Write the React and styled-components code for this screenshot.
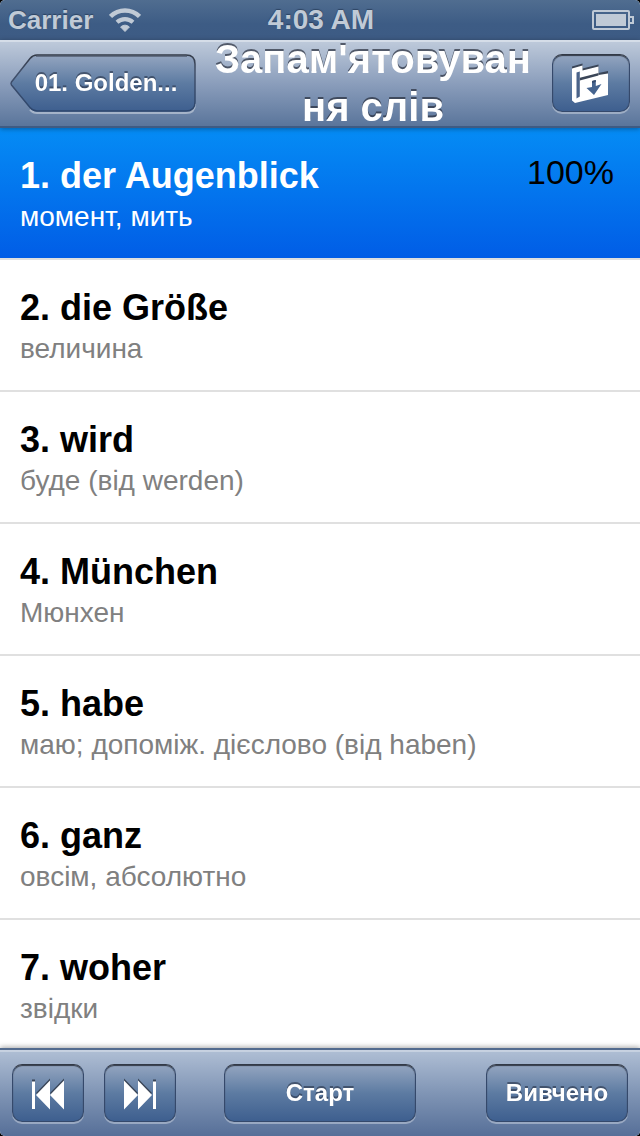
import React, { useState } from 'react';
import styled, { createGlobalStyle, css } from 'styled-components';

const words = [
  { term: 'der Augenblick', translation: 'момент, мить', progress: '100%' },
  { term: 'die Größe', translation: 'величина' },
  { term: 'wird', translation: 'буде (від werden)' },
  { term: 'München', translation: 'Мюнхен' },
  { term: 'habe', translation: 'маю; допоміж. дієслово (від haben)' },
  { term: 'ganz', translation: 'овсім, абсолютно' },
  { term: 'woher', translation: 'звідки' },
];

const App = () => {
  const [selected, setSelected] = useState(0);

  return (
    <Screen>
      <GlobalStyle />
      <StatusBar>
        <Carrier>
          Carrier
          <WifiIcon />
        </Carrier>
        <Clock>4:03 AM</Clock>
        <BatteryIcon />
      </StatusBar>

      <NavBar>
        <BackButton type="button">
          <BackShape />
          <span>01. Golden...</span>
        </BackButton>
        <Title>Запам'ятовування слів</Title>
        <BarButton type="button" $width={78} aria-label="Import">
          <FolderIcon />
        </BarButton>
      </NavBar>

      <WordList>
        {words.map(({ term, translation, progress }, idx) => (
          <li key={term}>
            <WordRow
              type="button"
              $active={idx === selected}
              onClick={() => setSelected(idx)}
            >
              <WordText>
                <strong>{idx + 1}. {term}</strong>
                <small>{translation}</small>
              </WordText>
              {progress && <Progress>{progress}</Progress>}
            </WordRow>
          </li>
        ))}
      </WordList>

      <Toolbar>
        <SkipButtons>
          <BarButton
            type="button"
            $width={72}
            aria-label="Previous"
            onClick={() => setSelected(Math.max(selected - 1, 0))}
          >
            <SkipIcon />
          </BarButton>
          <BarButton
            type="button"
            $width={72}
            aria-label="Next"
            onClick={() => setSelected(Math.min(selected + 1, words.length - 1))}
          >
            <SkipIcon forward />
          </BarButton>
        </SkipButtons>
        <BarButton type="button" $width={192}>Старт</BarButton>
        <LearnedButton type="button" $width={142}>Вивчено</LearnedButton>
      </Toolbar>
    </Screen>
  );
};

const WifiIcon = () => (
  <svg width="32" height="24" viewBox="0 0 32 24" fill="none" stroke="#c0cad6">
    <path d="M1.5 8.5 A20.5 20.5 0 0 1 30.5 8.5" strokeWidth="4.5" />
    <path d="M8 14.2 A12 12 0 0 1 24 14.2" strokeWidth="4.2" />
    <path d="M16 23.5 L11.6 19 A6.2 6.2 0 0 1 20.4 19 Z" fill="#c0cad6" />
  </svg>
);

const BatteryIcon = () => (
  <BatterySvg width="42" height="20" viewBox="0 0 42 20" fill="none">
    <rect x="1" y="1" width="36" height="18" rx="1" stroke="#c0cad6" strokeWidth="2" />
    <rect x="4" y="4" width="30" height="12" fill="#c0cad6" />
    <path d="M38 7 H41 V13 H38" stroke="#c0cad6" strokeWidth="2" />
  </BatterySvg>
);

const BackShape = () => (
  <BackSvg viewBox="0 0 186 58" preserveAspectRatio="none" fill="none">
    <defs>
      <linearGradient id="back-fill" x1="0" y1="0" x2="0" y2="1">
        <stop offset="0" stopColor="#94a5c0" />
        <stop offset="0.5" stopColor="#5d7ba2" />
        <stop offset="1" stopColor="#3e5f8f" />
      </linearGradient>
      <linearGradient id="back-line" x1="0" y1="0" x2="0" y2="1">
        <stop offset="0" stopColor="#333a47" />
        <stop offset="0.3" stopColor="#42506a" />
        <stop offset="1" stopColor="#2d466d" />
      </linearGradient>
    </defs>
    <path
      d="M20 55.5 Q23 59 27 59 H176 Q185 59 185 50"
      stroke="#fff"
      strokeOpacity="0.4"
      strokeWidth="2"
    />
    <path
      d="M27 1 H176 Q185 1 185 10 V48 Q185 57 176 57 H27 Q23 57 20 53.5 L1.5 31 Q0.5 29.500 1.5 28 L20 4.5 Q23 1 27 1 Z"
      fill="url(#back-fill)"
      stroke="url(#back-line)"
      strokeWidth="1.5"
    />
    <path d="M26 2.5 H177" stroke="#333a47" strokeOpacity="0.5" />
  </BackSvg>
);

const FolderIcon = () => (
  <svg width="42" height="42" viewBox="0 0 42 42">
    <path d="M2 4.500 L12.5 1.5 V6.5 L28.5 2.5 V11 L38 9 V13 L28.5 15 L12 10 L2 9 Z" fill="#3a4557" />
    <path
      d="M2 6.500 L12.5 3.5 V8.5 L28.5 4.5 V13 L38 11.5 V33 L5 41 L2 38.5 Z"
      fill="#fff"
    />
    <path d="M6.5 10.500 L9.8 9.6 V34.5 L6.5 36.5 Z" fill="#4a6389" />
    <path d="M9.8 15.800 L28.5 11 V13.4 L9.8 18.4 Z" fill="#3a4557" />
    <path d="M22 19 L25.8 18 V24 L31.5 22 L24 33 L16.5 26 L22 25 Z" fill="#45648f" />
    <path d="M22 19 L25.8 18 V20 L22 21 Z" fill="#344a6c" />
  </svg>
);

const SkipIcon = ({ forward }) => (
  <svg width="32" height="34" viewBox="0 0 32 34">
    <g transform={forward ? 'matrix(-1 0 0 1 32 0)' : undefined}>
      <path d="M0 3.500 H3 V31 H0 Z M4 17 L18 2.5 V31 Z M18 17 L32 2.5 V31 Z" fill="#3a4557" />
      <path d="M0 5.500 H3 V33 H0 Z M4 19 L18 4.5 V33.5 Z M18 19 L32 4.5 V33.5 Z" fill="#fff" />
    </g>
  </svg>
);

const GlobalStyle = createGlobalStyle`
  * {
    box-sizing: border-box;
  }

  body {
    margin: 0;
    background-color: #000;
    font-family: 'Liberation Sans', Arial, sans-serif;
  }
`;

const Screen = styled.div`
  display: flex;
  flex-direction: column;
  height: 100vh;
  border-radius: 5px;
  overflow: hidden;
  background-color: #fff;
`;

const StatusBar = styled.div`
  display: grid;
  grid-template-columns: 1fr auto 1fr;
  align-items: center;
  flex-shrink: 0;
  height: 40px;
  padding: 0 6px 0 8px;
  color: #c0cad6;
  font-size: 26px;
  font-weight: 700;
  text-shadow: 0 -1px 1px rgba(20, 35, 60, 0.5);
  background-image: linear-gradient(#506d90, #3d5c85 60%, #3d5b84);
`;

const Carrier = styled.div`
  display: flex;
  align-items: center;
  gap: 16px;
`;

const Clock = styled.span`
  font-size: 28px;
`;

const BatterySvg = styled.svg`
  justify-self: end;
`;

const NavBar = styled.header`
  position: relative;
  display: flex;
  align-items: center;
  flex-shrink: 0;
  height: 88px;
  padding: 0 10px 2px;
  border-top: 2px solid #d5dde8;
  border-bottom: 2px solid #3f5b83;
  box-shadow: 0 1px 5px rgba(0, 0, 0, 0.35);
  background-image: linear-gradient(#bdc9da, #8a9dbb 50%, #5a759b);
`;

const Title = styled.h1`
  flex: 1;
  margin: 0;
  padding: 0 14px 0 12px;
  color: #fff;
  font-size: 40px;
  line-height: 48px;
  text-align: center;
  overflow-wrap: anywhere;
  text-shadow: 0 -2px 0 rgba(40, 45, 60, 0.7);
`;

const buttonText = css`
  color: #fff;
  font-family: inherit;
  font-size: 24px;
  font-weight: 700;
  text-shadow: 0 -2px 0 rgba(40, 50, 70, 0.6);
`;

const BackButton = styled.button`
  ${buttonText}
  position: relative;
  width: 186px;
  height: 58px;
  padding: 0 16px 0 22px;
  border: none;
  background: none;

  > span {
    position: relative;
  }
`;

const BackSvg = styled.svg`
  position: absolute;
  inset: 0;
  width: 100%;
  height: 100%;
  overflow: visible;
`;

const BarButton = styled.button`
  ${buttonText}
  display: flex;
  justify-content: center;
  align-items: center;
  width: ${({ $width }) => $width}px;
  height: 58px;
  padding: 0;
  border: 1px solid #35496b;
  border-top-color: #333a47;
  border-radius: 10px;
  box-shadow: 0 2px 0 rgba(255, 255, 255, 0.35), inset 0 1px 1px #333a47;
  background-image: linear-gradient(#94a5c0, #5d7ba2 50%, #3e5f8f);
`;

const WordList = styled.ol`
  flex: 1;
  min-height: 0;
  margin: 0;
  padding: 0;
  list-style: none;
  overflow-y: auto;
  scrollbar-width: none;
`;

const WordRow = styled.button`
  display: flex;
  justify-content: space-between;
  align-items: flex-start;
  width: 100%;
  height: 132px;
  padding: 26px 26px 0 20px;
  border: none;
  border-bottom: 2px solid #e0e0e0;
  color: ${({ $active }) => ($active ? '#fff' : '#000')};
  font-family: inherit;
  text-align: left;
  background: ${({ $active }) =>
    $active ? 'linear-gradient(#058cf5, #015de6)' : '#fff'};

  small {
    color: ${({ $active }) => ($active ? '#fff' : '#808080')};
  }
`;

const WordText = styled.span`
  display: flex;
  flex-direction: column;

  > strong {
    font-size: 36px;
    line-height: 44px;
  }

  > small {
    font-size: 28px;
    line-height: 38px;
  }
`;

const Progress = styled.span`
  color: #000;
  font-size: 34px;
  line-height: 36px;
`;

const Toolbar = styled.footer`
  position: relative;
  display: grid;
  grid-template-columns: 1fr auto 1fr;
  align-items: center;
  flex-shrink: 0;
  height: 88px;
  padding: 0 12px;
  border-top: 2px solid #536b8e;
  box-shadow: 0 -1px 5px rgba(0, 0, 0, 0.35), inset 0 2px 0 rgba(255, 255, 255, 0.3);
  background-image: linear-gradient(#b0bfd5, #8095b5 50%, #566f98);
`;

const SkipButtons = styled.div`
  display: flex;
  gap: 20px;
`;

const LearnedButton = styled(BarButton)`
  justify-self: end;
`;

export default App;
